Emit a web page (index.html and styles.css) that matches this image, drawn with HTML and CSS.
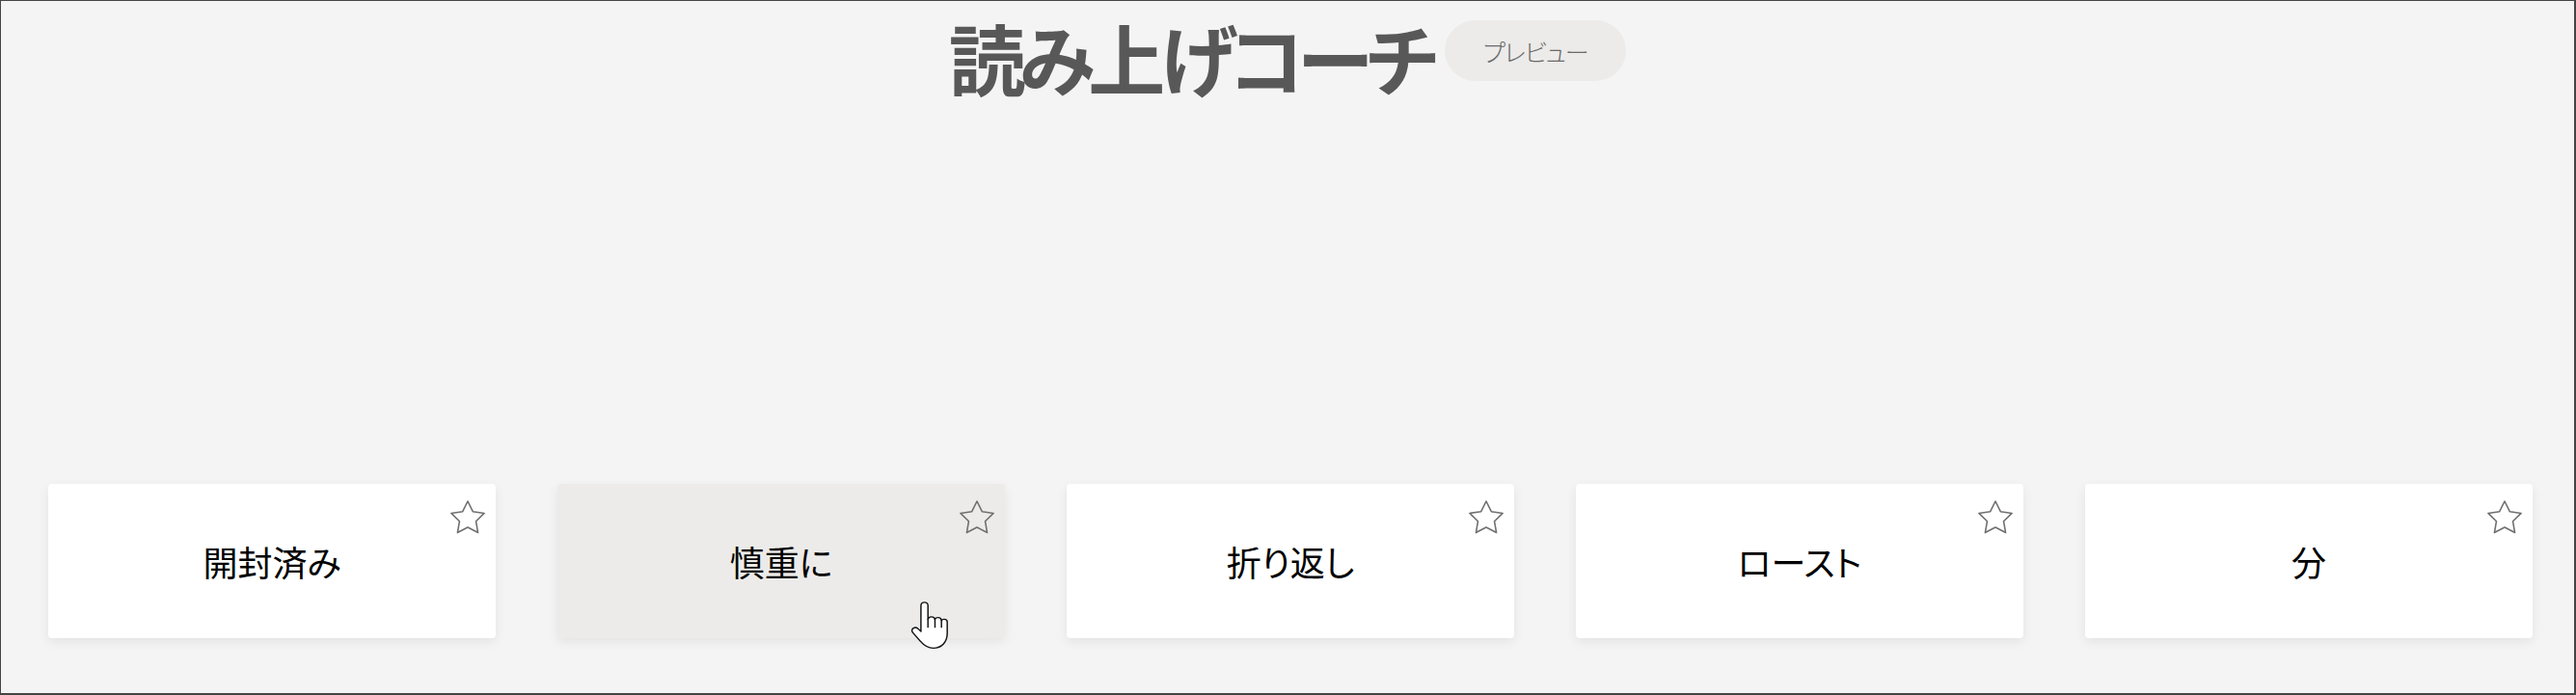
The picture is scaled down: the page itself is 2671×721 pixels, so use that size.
FILE: index.html
```html
<!DOCTYPE html>
<html lang="ja">
<head>
<meta charset="utf-8">
<title>読み上げコーチ</title>
<link rel="stylesheet" href="styles.css">
</head>
<body>
<div class="page">
  <header class="header">
    <h1 class="title">読み上げコーチ</h1>
    <span class="badge">プレビュー</span>
  </header>
  <main class="cards">
    <div class="card">
      <span class="card-label">開封済み</span>
      <svg class="star" viewBox="-1 -1 38 37" width="38" height="37"><path d="M18 1 L23.29 11.72 L35.12 13.44 L26.56 21.78 L28.58 33.56 L18 28 L7.42 33.56 L9.44 21.78 L0.88 13.44 L12.71 11.72 Z"/></svg>
    </div>
    <div class="card card-hover">
      <span class="card-label">慎重に</span>
      <svg class="star" viewBox="-1 -1 38 37" width="38" height="37"><path d="M18 1 L23.29 11.72 L35.12 13.44 L26.56 21.78 L28.58 33.56 L18 28 L7.42 33.56 L9.44 21.78 L0.88 13.44 L12.71 11.72 Z"/></svg>
      <svg class="cursor" viewBox="1 1 22 30" width="40" height="50" preserveAspectRatio="none"><path class="hand" d="M9 1.5 C10.1 1.5 11 2.4 11 3.5 V12 C11.3 11 12.1 10.5 13 10.5 C14 10.5 14.8 11.2 15 12.1 C15.3 11.4 16 11 16.8 11 C17.8 11 18.6 11.8 18.7 12.8 C19 12.3 19.6 12 20.2 12 C21.2 12 22 12.8 22 13.8 V21 C22 26 19 30 14 30 C10.5 30 8.5 28 6.5 25.5 L2.3 20.3 C1.6 19.4 1.8 18.2 2.7 17.6 C3.5 17 4.6 17.2 5.3 17.9 L7 19.7 V3.5 C7 2.4 7.9 1.5 9 1.5 Z"/><path class="knuckle" d="M11 12 V17 M15 12.1 V17 M18.7 12.8 V17"/></svg>
    </div>
    <div class="card">
      <span class="card-label">折り返し</span>
      <svg class="star" viewBox="-1 -1 38 37" width="38" height="37"><path d="M18 1 L23.29 11.72 L35.12 13.44 L26.56 21.78 L28.58 33.56 L18 28 L7.42 33.56 L9.44 21.78 L0.88 13.44 L12.71 11.72 Z"/></svg>
    </div>
    <div class="card">
      <span class="card-label">ロースト</span>
      <svg class="star" viewBox="-1 -1 38 37" width="38" height="37"><path d="M18 1 L23.29 11.72 L35.12 13.44 L26.56 21.78 L28.58 33.56 L18 28 L7.42 33.56 L9.44 21.78 L0.88 13.44 L12.71 11.72 Z"/></svg>
    </div>
    <div class="card">
      <span class="card-label">分</span>
      <svg class="star" viewBox="-1 -1 38 37" width="38" height="37"><path d="M18 1 L23.29 11.72 L35.12 13.44 L26.56 21.78 L28.58 33.56 L18 28 L7.42 33.56 L9.44 21.78 L0.88 13.44 L12.71 11.72 Z"/></svg>
    </div>
  </main>
</div>
</body>
</html>
```
FILE: styles.css
```css
html, body {
  margin: 0;
  padding: 0;
}
body {
  background: #f4f4f4;
  font-family: "Noto Sans CJK JP", "Noto Sans", sans-serif;
  font-feature-settings: "palt";
}
.page {
  box-sizing: border-box;
  width: 2671px;
  height: 721px;
  border-style: solid;
  border-color: #444444;
  border-width: 1px 2px 2px 1px;
  display: flex;
  flex-direction: column;
}
.header {
  display: flex;
  justify-content: center;
  align-items: flex-start;
  gap: 14px;
  padding-top: 17px;
}
.title {
  margin: 0;
  font-size: 80px;
  line-height: 1;
  font-weight: 700;
  letter-spacing: -7px;
  color: #585858;
}
.badge {
  margin-top: 3px;
  width: 188px;
  height: 63px;
  border-radius: 32px;
  background: #ecebe9;
  color: #6a6a6a;
  font-size: 25px;
  font-weight: 300;
  letter-spacing: -1px;
  display: flex;
  align-items: center;
  justify-content: center;
}
.cards {
  display: flex;
  gap: 64px;
  padding-left: 49px;
  margin-top: auto;
  margin-bottom: 57px;
}
.card {
  position: relative;
  flex: 0 0 464px;
  height: 160px;
  background: #ffffff;
  border-radius: 4px;
  box-shadow: 0 4px 12px rgba(0, 0, 0, 0.07);
  display: flex;
  align-items: center;
  justify-content: center;
}
.card-hover {
  background: #ecebe9;
}
.card-label {
  font-size: 36px;
  font-weight: 400;
  color: #000000;
  line-height: 1;
}
.star {
  position: absolute;
  top: 16px;
  right: 10px;
}
.star path {
  fill: none;
  stroke: #707070;
  stroke-width: 1.6;
  stroke-linejoin: round;
}
.cursor {
  position: absolute;
  left: 366px;
  top: 122px;
}
.cursor .hand {
  fill: #ffffff;
  stroke: #111111;
  stroke-width: 0.8;
  stroke-linejoin: round;
}
.cursor .knuckle {
  fill: none;
  stroke: #111111;
  stroke-width: 0.8;
  stroke-linecap: round;
}
```
